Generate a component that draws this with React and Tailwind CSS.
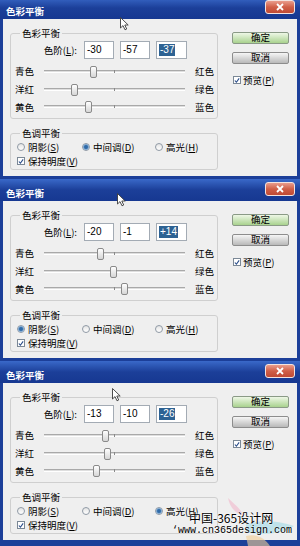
import React from "react";

const TRACK = 141;

function Thumb({ value }) {
  const left = ((value + 100) / 200) * TRACK - 3.5;
  return (
    <div
      className="absolute top-[-5px] w-[7px] h-[12px] rounded-[2px] border border-[#8a8a8a] bg-gradient-to-b from-white to-[#d6d6d6]"
      style={{ left }}
    />
  );
}

function SliderRow({ left, right, value, h }) {
  return (
    <div className={`flex items-center pl-[4px] ${h}`}>
      <span className="w-[20px] whitespace-nowrap">{left}</span>
      <div className="ml-[9px] w-[141px] h-[3px] relative border-t border-[#a9a9a9] border-b border-b-white bg-[#dedede]">
        <div className="absolute left-[70px] top-[-1px] w-[1px] h-[3px] bg-[#8a8a8a]" />
        <Thumb value={value} />
      </div>
      <span className="ml-[10px] whitespace-nowrap">{right}</span>
    </div>
  );
}

function Input({ text, selected, w }) {
  return (
    <div className={`${w} h-[18px] border border-[#a3abb4] bg-white flex items-center pl-[2px] font-['Liberation_Sans',sans-serif] text-[10px]`}>
      {selected ? (
        <span className="bg-[#2d6293] text-white leading-[12px] px-[1px]">{text}</span>
      ) : (
        <span className="leading-[12px]">{text}</span>
      )}
    </div>
  );
}

function Radio({ checked }) {
  return (
    <div className="w-[8px] h-[8px] rounded-full border border-[#909aa5] bg-gradient-to-b from-[#e4e4e4] to-white flex items-center justify-center shrink-0">
      {checked && <div className="w-[4px] h-[4px] rounded-full bg-[#2f6aa8] ring-1 ring-[#7fa7cf]" />}
    </div>
  );
}

function Check() {
  return (
    <div className="w-[8px] h-[8px] border border-[#7b8896] bg-white flex items-center justify-center shrink-0">
      <svg width="7" height="7" viewBox="0 0 7 7">
        <path d="M1 3.5 L2.8 5.5 L6 1" fill="none" stroke="#2a4d8a" strokeWidth="1.3" />
      </svg>
    </div>
  );
}

function Cursor({ pos }) {
  return (
    <svg className={`absolute ${pos}`} width="10" height="14" viewBox="0 0 10 14">
      <path
        d="M0.5 0.5 L0.5 11 L3 8.6 L5 12.8 L6.7 12 L4.8 8 L8.2 8 Z"
        fill="white"
        stroke="#3a3a3a"
        strokeWidth="0.9"
        strokeLinejoin="round"
      />
    </svg>
  );
}

function Dialog({ vals, tone, cursor }) {
  return (
    <div className="h-[182px] flex flex-col bg-[#1c3f99] relative shrink-0">
      {/* title bar */}
      <div className="h-[22px] flex items-start bg-gradient-to-b from-[#3a69c9] via-[#1c3f99] to-[#163891] shrink-0">
        <span className="mt-[8px] ml-[6px] text-white font-bold text-[9.5px] leading-[12px]">色彩平衡</span>
        <div className="ml-auto mr-[5px] mt-[3px] w-[30px] h-[14px] rounded-[3px] border border-[#f3e3e0] bg-gradient-to-b from-[#e99c8c] via-[#d05f48] to-[#c04a34] flex items-center justify-center">
          <svg width="8" height="8" viewBox="0 0 8 8">
            <path d="M1 1 L7 7 M7 1 L1 7" stroke="white" strokeWidth="1.8" />
          </svg>
        </div>
      </div>
      {/* body */}
      <div className="h-[157px] mx-[3px] bg-[#efefef] flex pt-[14px] pl-[7px] shrink-0">
        <div className="w-[208px] flex flex-col">
          {/* group 1 */}
          <div className="border border-[#cfcfcf] rounded-[3px] flex flex-col pb-[3px]">
            <span className="self-start ml-[9px] -mt-[7px] px-[2px] bg-[#efefef] h-[12px] leading-[12px]">色彩平衡</span>
            <div className="flex items-center h-[18px] mt-[2px]">
              <span className="w-[66px] text-right whitespace-nowrap">
                色阶(<span className="underline">L</span>):
              </span>
              <div className="ml-[7px] flex gap-[6px]">
                <Input text={vals[0]} w="w-[30px]" />
                <Input text={vals[1]} w="w-[30px]" />
                <Input text={vals[2]} w="w-[31px]" selected />
              </div>
            </div>
            <div className="mt-[3px] flex flex-col">
              <SliderRow left="青色" right="红色" value={Number(vals[0])} h="h-[18px]" />
              <SliderRow left="洋红" right="绿色" value={Number(vals[1])} h="h-[18px]" />
              <SliderRow left="黄色" right="蓝色" value={Number(vals[2])} h="h-[17px]" />
            </div>
          </div>
          {/* group 2 */}
          <div className="mt-[14px] border border-[#cfcfcf] rounded-[3px] flex flex-col pb-[1px]">
            <span className="self-start ml-[9px] -mt-[7px] px-[2px] bg-[#efefef] h-[12px] leading-[12px]">色调平衡</span>
            <div className="mt-[1px] h-[14px] flex items-center pl-[6px]">
              <div className="w-[65px] flex items-center">
                <Radio checked={tone === "s"} />
                <span className="ml-[3px] whitespace-nowrap">
                  阴影(<span className="underline">S</span>)
                </span>
              </div>
              <div className="w-[73px] flex items-center">
                <Radio checked={tone === "d"} />
                <span className="ml-[3px] whitespace-nowrap">
                  中间调(<span className="underline">D</span>)
                </span>
              </div>
              <div className="flex items-center">
                <Radio checked={tone === "h"} />
                <span className="ml-[3px] whitespace-nowrap">
                  高光(<span className="underline">H</span>)
                </span>
              </div>
            </div>
            <div className="h-[14px] flex items-center pl-[6px]">
              <Check />
              <span className="ml-[3px] whitespace-nowrap">
                保持明度(<span className="underline">V</span>)
              </span>
            </div>
          </div>
        </div>
        {/* buttons */}
        <div className="ml-[14px] w-[57px] flex flex-col -mt-[1px]">
          <div className="h-[12px] border border-[#8a9a86] rounded-[2px] bg-gradient-to-b from-[#eef7e6] to-[#a9d28e] flex items-center justify-center leading-none">
            确定
          </div>
          <div className="mt-[8px] h-[12px] border border-[#8d8d8d] rounded-[2px] bg-gradient-to-b from-[#f6f6f6] to-[#b9b9b9] flex items-center justify-center leading-none">
            取消
          </div>
          <div className="mt-[10px] h-[12px] flex items-center pl-[1px]">
            <Check />
            <span className="ml-[2px] whitespace-nowrap">
              预览(<span className="underline">P</span>)
            </span>
          </div>
        </div>
      </div>
      <Cursor pos={cursor} />
    </div>
  );
}

export default function App() {
  return (
    <div className="w-[300px] h-[546px] overflow-hidden bg-[#1c3f99] relative font-['Noto_Sans_CJK_SC','Noto_Sans',sans-serif] text-[9.5px] leading-[12px] text-black">
      <div className="-mt-[3px] flex flex-col">
        <Dialog vals={["-30", "-57", "-37"]} tone="d" cursor="left-[120px] top-[20px]" />
        <Dialog vals={["-20", "-1", "+14"]} tone="s" cursor="left-[117px] top-[14px]" />
        <Dialog vals={["-13", "-10", "-26"]} tone="h" cursor="left-[112px] top-[27px]" />
      </div>
      {/* watermark logo */}
      <svg className="absolute left-[222px] top-[494px] opacity-60" width="76" height="52" viewBox="0 0 76 52">
        <path d="M6 4 C12 10 18 14 22 22 C14 20 8 14 6 4 Z" fill="#f2b8cc" />
        <path d="M24 30 C38 26 56 26 72 32 C60 40 40 42 24 38 Z" fill="#9fdbe8" />
        <path d="M24 42 C32 40 42 42 48 52 L26 52 Z" fill="#f3cf95" />
      </svg>
      <span className="absolute left-[189px] top-[511px] text-[12px] leading-[14px] font-['Noto_Sans_CJK_SC',sans-serif] text-black [text-shadow:0_0_2px_#fff,0_0_2px_#fff] whitespace-nowrap">
        中国-365设计网
      </span>
      <span className="absolute left-[172px] top-[525px] text-[10px] leading-[12px] font-['Liberation_Mono',monospace] text-black [text-shadow:0_0_2px_#fff] whitespace-nowrap">
        ‘www.cn365design.com
      </span>
    </div>
  );
}
